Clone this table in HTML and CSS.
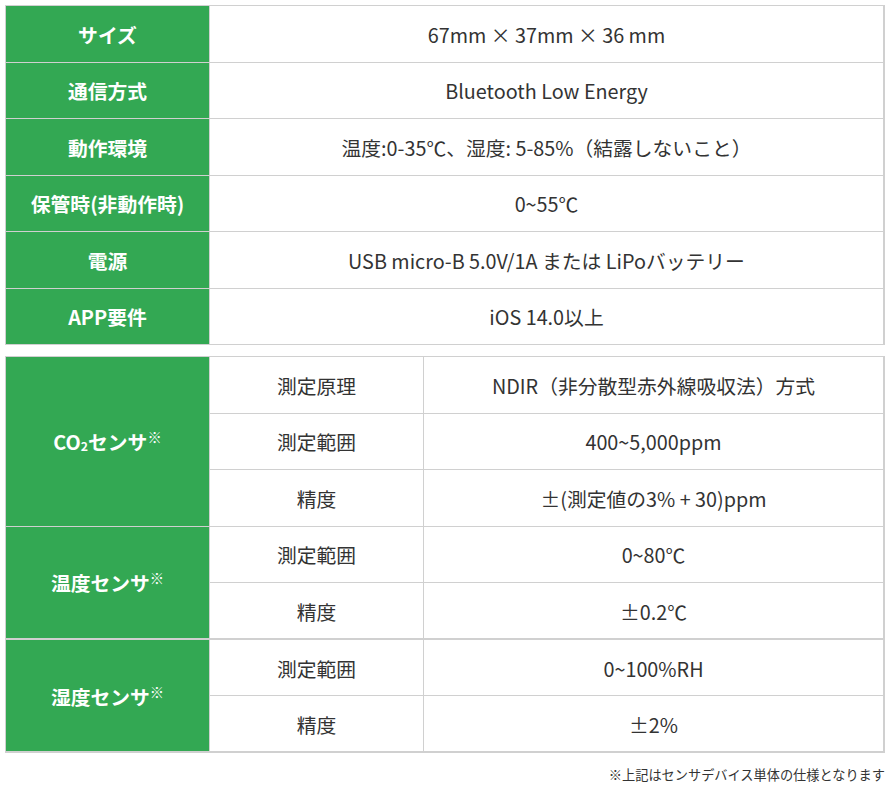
FILE: index.html
```html
<!DOCTYPE html>
<html lang="ja">
<head>
<meta charset="utf-8">
<link rel="stylesheet" href="styles.css">
</head>
<body>
<div class="page">
  <table class="spec spec-basic">
    <colgroup><col class="c-head"><col></colgroup>
    <tr><th>サイズ</th><td>67mm × 37mm × 36 mm</td></tr>
    <tr><th>通信方式</th><td>Bluetooth Low Energy</td></tr>
    <tr><th>動作環境</th><td>温度:0-35℃、湿度: 5-85%（結露しないこと）</td></tr>
    <tr><th>保管時(非動作時)</th><td>0~55℃</td></tr>
    <tr><th>電源</th><td>USB micro-B 5.0V/1A または LiPoバッテリー</td></tr>
    <tr><th>APP要件</th><td>iOS 14.0以上</td></tr>
  </table>

  <table class="spec spec-sensor">
    <colgroup><col class="c-head"><col class="c-sub"><col></colgroup>
    <tr><th rowspan="3">CO<span class="sub">2</span>センサ<sup>※</sup></th><td>測定原理</td><td>NDIR（非分散型赤外線吸収法）方式</td></tr>
    <tr><td>測定範囲</td><td>400~5,000ppm</td></tr>
    <tr class="grp-end"><td>精度</td><td>±(測定値の3% + 30)ppm</td></tr>
    <tr><th rowspan="2">温度センサ<sup>※</sup></th><td>測定範囲</td><td>0~80℃</td></tr>
    <tr class="grp-end thick"><td>精度</td><td>±0.2℃</td></tr>
    <tr class="thick-top"><th rowspan="2">湿度センサ<sup>※</sup></th><td>測定範囲</td><td>0~100%RH</td></tr>
    <tr><td>精度</td><td>±2%</td></tr>
  </table>

  <p class="note">※上記はセンサデバイス単体の仕様となります</p>
</div>
</body>
</html>
```

FILE: styles.css
```css
html, body {
  margin: 0;
  padding: 0;
  background: #fff;
}
body {
  font-family: "Noto Sans CJK JP", "Noto Sans", sans-serif;
  color: #333;
}
.page {
  padding: 5px 0 0 5px;
  width: 880px;
}
.spec {
  width: 880px;
  border-collapse: collapse;
  table-layout: fixed;
  border-top: 1px solid #d0d0d0;
  border-left: 1px solid #d0d0d0;
  border-right: 2px solid #d0d0d0;
  border-bottom: 2px solid #d0d0d0;
}
.spec-basic {
  border-bottom-width: 1px;
  margin-bottom: 11px;
}
.c-head { width: 204px; }
.c-sub { width: 214px; }
.spec th, .spec td {
  border: 1px solid #d0d0d0;
  height: 56.5px;
  padding: 2px 8px 0;
  text-align: center;
  vertical-align: middle;
  font-size: 19.8px;
  line-height: 1.4;
  box-sizing: border-box;
}
.spec th {
  background: #33a853;
  color: #fff;
  font-weight: 700;
}
.spec td {
  font-weight: 400;
  color: #333;
}
.spec .thick td { border-bottom: 2px solid #d0d0d0; }
.spec .thick-top th { border-top: 2px solid #d0d0d0; }
.sub {
  font-size: 0.62em;
  vertical-align: -0.1em;
}
sup {
  font-size: 0.72em;
  vertical-align: 0.5em;
  line-height: 0;
  font-weight: 700;
}
.note {
  margin: 13px 0 0;
  text-align: right;
  font-size: 13.2px;
  color: #333;
  line-height: 1.4;
}
```
